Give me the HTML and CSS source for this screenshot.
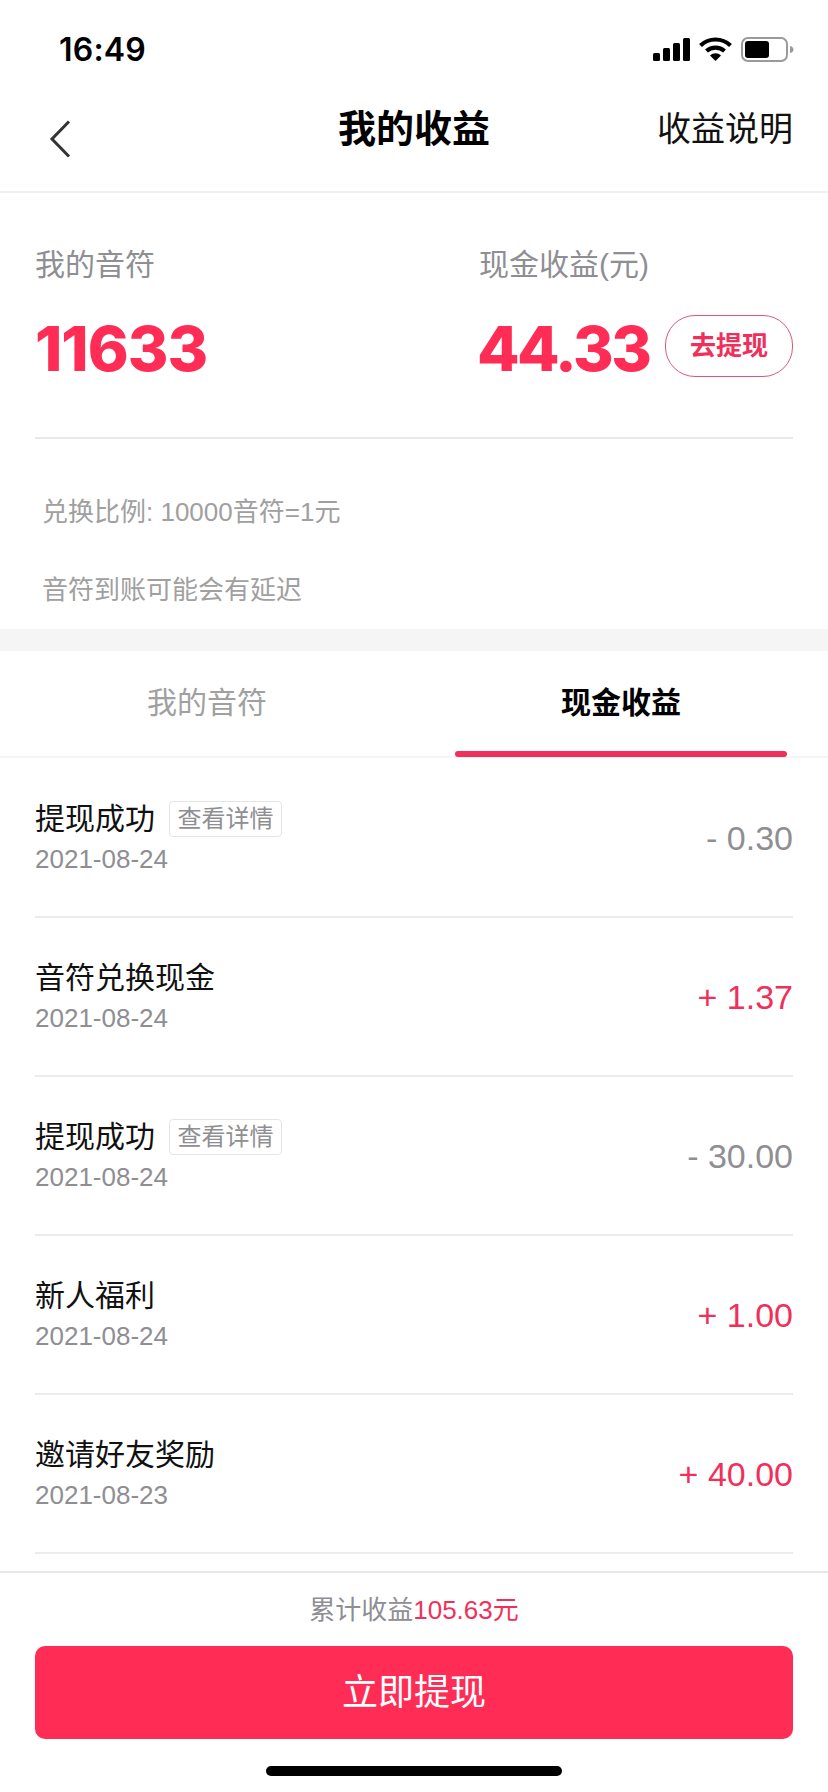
FILE: index.html
```html
<!DOCTYPE html>
<html lang="zh-CN">
<head>
<meta charset="utf-8">
<title>我的收益</title>
<link rel="stylesheet" href="styles.css">
</head>
<body>
<div class="page">
  <div class="status">
    <span class="time">16:49</span>
    <div class="status-icons">
      <svg class="i-signal" width="37" height="23" viewBox="0 0 37 23"><rect x="0" y="15" width="7" height="8" rx="1.5"/><rect x="10" y="10" width="7" height="13" rx="1.5"/><rect x="20" y="5" width="7" height="18" rx="1.5"/><rect x="30" y="0" width="7" height="23" rx="1.5"/></svg>
      <svg class="i-wifi" width="33" height="24" viewBox="0 0 33 24"><path d="M1.500 8.500C10 .5 23 .5 31.500 8.500" fill="none" stroke="#000" stroke-width="4.200"/><path d="M7.500 14C12.500 9.500 20.500 9.500 25.500 14" fill="none" stroke="#000" stroke-width="4.200"/><path d="M11 18.500L16.500 24L22 18.500C18.500 15.500 14.500 15.500 11 18.500Z"/></svg>
      <svg class="i-batt" width="53" height="25" viewBox="0 0 53 25"><rect x="1" y="1" width="45" height="23" rx="6" fill="none" stroke="#9a9a9a" stroke-width="2"/><rect x="4" y="4" width="24" height="17" rx="3"/><path d="M49 9C51.500 9.500 52.500 11 52.500 12.500C52.500 14 51.500 15.500 49 16Z" fill="#9a9a9a"/></svg>
    </div>
  </div>
  <header class="nav">
    <svg class="back" width="22" height="38" viewBox="0 0 22 38"><path d="M20 1.500L3 19L20 36.500" fill="none" stroke="#333" stroke-width="3"/></svg>
    <h1 class="nav-title">我的收益</h1>
    <span class="nav-link">收益说明</span>
  </header>

  <section class="summary">
    <div class="stats">
      <div class="stat stat-left">
        <div class="stat-label">我的音符</div>
        <div class="stat-value">11633</div>
      </div>
      <div class="stat stat-right">
        <div class="stat-label">现金收益(元)</div>
        <div class="stat-line">
          <div class="stat-value stat-cash">44.33</div>
          <span class="pill">去提现</span>
        </div>
      </div>
    </div>
    <div class="notes">
      <p class="note">兑换比例: 10000音符=1元</p>
      <p class="note">音符到账可能会有延迟</p>
    </div>
  </section>

  <div class="band"></div>

  <nav class="tabs">
    <div class="tab">我的音符</div>
    <div class="tab tab-active">现金收益</div>
  </nav>

  <main class="list">
    <div class="row">
      <div class="row-main">
        <div class="row-title">提现成功<span class="tag">查看详情</span></div>
        <div class="row-date">2021-08-24</div>
      </div>
      <div class="amount">- 0.30</div>
    </div>
    <div class="row">
      <div class="row-main">
        <div class="row-title">音符兑换现金</div>
        <div class="row-date">2021-08-24</div>
      </div>
      <div class="amount plus">+ 1.37</div>
    </div>
    <div class="row">
      <div class="row-main">
        <div class="row-title">提现成功<span class="tag">查看详情</span></div>
        <div class="row-date">2021-08-24</div>
      </div>
      <div class="amount">- 30.00</div>
    </div>
    <div class="row">
      <div class="row-main">
        <div class="row-title">新人福利</div>
        <div class="row-date">2021-08-24</div>
      </div>
      <div class="amount plus">+ 1.00</div>
    </div>
    <div class="row">
      <div class="row-main">
        <div class="row-title">邀请好友奖励</div>
        <div class="row-date">2021-08-23</div>
      </div>
      <div class="amount plus">+ 40.00</div>
    </div>
  </main>

  <footer class="footer">
    <div class="total">累计收益<span class="total-num">105.63元</span></div>
    <button class="cta">立即提现</button>
    <div class="home-bar"></div>
  </footer>
</div>
</body>
</html>
```
FILE: styles.css
```css
* { box-sizing: border-box; margin: 0; padding: 0; }
html, body { background: #fff; }
body {
  font-family: "Liberation Sans", "Noto Sans CJK SC", sans-serif;
  color: #111;
}
.page {
  width: 828px;
  height: 1792px;
  display: flex;
  flex-direction: column;
  overflow: hidden;
}
.status {
  height: 88px;
  padding: 32px 34px 0 59px;
  display: flex;
  justify-content: space-between;
  align-items: flex-start;
}
.time {
  font-family: "Inter", "Liberation Sans", sans-serif;
  font-size: 32px;
  font-weight: 600;
  line-height: 36px;
  color: #000;
  letter-spacing: 0.2px;
}
.status-icons {
  display: flex;
  align-items: flex-start;
  margin-top: 5px;
  gap: 9px;
}
.i-signal { margin-top: 1px; }
.nav {
  height: 105px;
  padding: 0 35px 0 49px;
  display: flex;
  align-items: center;
  justify-content: space-between;
  border-bottom: 2px solid #f0f0f0;
  position: relative;
}
.back { margin-top: -2px; }
.nav-title {
  position: absolute;
  left: 0;
  right: 0;
  top: 18px;
  text-align: center;
  font-size: 38px;
  line-height: 46px;
  font-weight: 700;
  color: #000;
}
.nav-link {
  font-size: 34px;
  line-height: 46px;
  margin-top: -21px;
  color: #111;
}
.summary {
  height: 436px;
  padding: 49px 35px 0;
}
.stats {
  display: flex;
  height: 197px;
  border-bottom: 2px solid #e9e9e9;
}
.stat-left { width: 444px; flex: none; }
.stat-right { flex: 1; }
.stat-label {
  font-size: 30px;
  line-height: 46px;
  color: #8e8e93;
}
.stat-line {
  display: flex;
  align-items: flex-start;
  justify-content: space-between;
}
.stat-value {
  font-family: "Inter", "Liberation Sans", sans-serif;
  font-size: 62px;
  font-weight: 800;
  line-height: 62px;
  color: #ff2d55;
  margin-top: 30px;
  letter-spacing: -1px;
}
.stat-cash {
  letter-spacing: -2.600px;
  margin-left: -2px;
}
.pill {
  width: 128px;
  height: 62px;
  margin-top: 27px;
  border: 1px solid #e2557a;
  border-radius: 30px;
  color: #f0305a;
  font-size: 26px;
  font-weight: 700;
  line-height: 60px;
  text-align: center;
}
.notes {
  padding: 55px 7px 0;
  display: flex;
  flex-direction: column;
  gap: 42px;
}
.note {
  font-size: 26px;
  line-height: 36px;
  color: #a0a0a0;
}
.band {
  height: 22px;
  background: #f5f5f5;
}
.tabs {
  height: 107px;
  display: flex;
  border-bottom: 2px solid #f5f5f5;
}
.tab {
  width: 50%;
  text-align: center;
  font-size: 30px;
  line-height: 103px;
  color: #a0a0a0;
  position: relative;
}
.tab-active {
  color: #000;
  font-weight: 700;
}
.tab-active::after {
  content: "";
  position: absolute;
  left: 41px;
  right: 41px;
  bottom: -1px;
  height: 6px;
  border-radius: 3px;
  background: #f0305a;
}
.list {
  flex: 1;
  padding: 1px 35px 0;
  overflow: hidden;
}
.row {
  height: 159px;
  display: flex;
  justify-content: space-between;
  align-items: center;
  border-bottom: 2px solid #ececec;
}
.row-main { margin-top: -2px; }
.row-title {
  font-size: 30px;
  line-height: 42px;
  color: #111;
  display: flex;
  align-items: center;
}
.tag {
  margin-left: 14px;
  width: 113px;
  height: 36px;
  border: 1px solid #e5e5e5;
  border-radius: 4px;
  font-size: 24px;
  line-height: 33px;
  text-align: center;
  color: #8e8e93;
}
.row-date {
  font-size: 26px;
  line-height: 32px;
  margin-top: 3px;
  color: #8e8e93;
}
.amount {
  font-size: 34px;
  line-height: 40px;
  color: #8e8e93;
}
.amount.plus { color: #f0305a; }
.footer {
  height: 221px;
  flex: none;
  border-top: 2px solid #e8e8e8;
  padding: 0 35px;
  display: flex;
  flex-direction: column;
  align-items: center;
}
.total {
  font-size: 26px;
  line-height: 36px;
  margin-top: 19px;
  color: #8e8e93;
}
.total-num { color: #f0305a; }
.cta {
  width: 758px;
  height: 93px;
  flex: none;
  margin-top: 18px;
  border: 0;
  border-radius: 10px;
  background: #ff2d55;
  color: #fff;
  font-family: inherit;
  font-size: 36px;
  line-height: 93px;
}
.home-bar {
  width: 296px;
  height: 10px;
  flex: none;
  margin-top: 27px;
  border-radius: 5px;
  background: #000;
}
```
